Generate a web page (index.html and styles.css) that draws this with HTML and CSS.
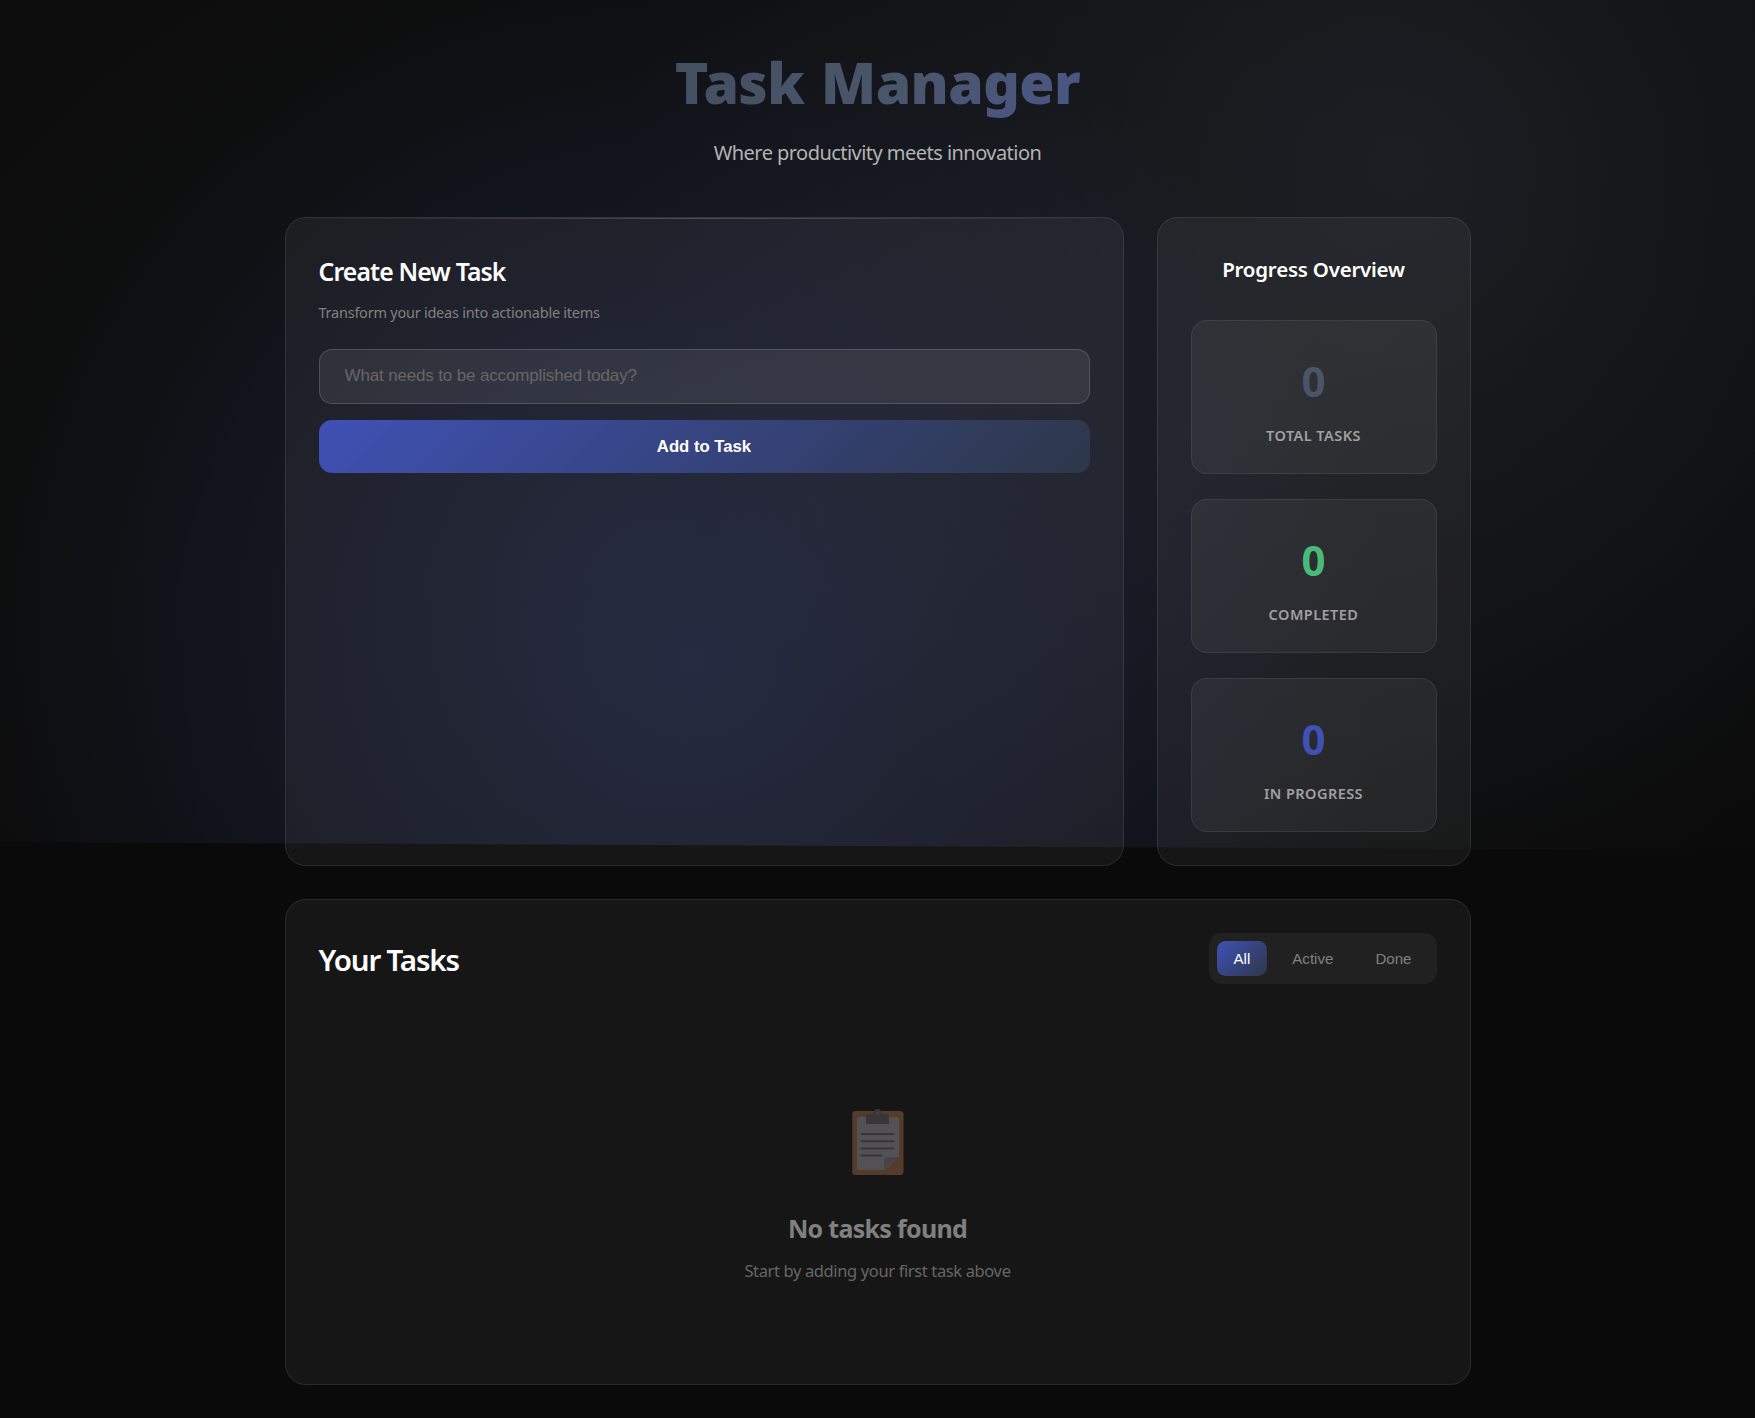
FILE: index.html
```html
<!DOCTYPE html>
<html lang="en">
<head>
<meta charset="utf-8">
<title>Task Manager</title>
<link rel="stylesheet" href="styles.css">
</head>
<body>
<div class="backdrop"></div>
<main class="container">
  <header class="header">
    <h1 class="title"><span class="title-fill">Task Manager</span></h1>
    <p class="subtitle">Where productivity meets innovation</p>
  </header>
  <div class="grid">
    <section class="card create">
      <h2 class="card-title">Create New Task</h2>
      <p class="card-text">Transform your ideas into actionable items</p>
      <form class="form">
        <input class="input" type="text" placeholder="What needs to be accomplished today?">
        <button class="submit" type="button">Add to Task</button>
      </form>
    </section>
    <aside class="card stats">
      <h3 class="stats-title">Progress Overview</h3>
      <div class="stat-list">
        <div class="stat"><div class="num total">0</div><div class="label">Total Tasks</div></div>
        <div class="stat"><div class="num done">0</div><div class="label">Completed</div></div>
        <div class="stat"><div class="num active">0</div><div class="label">In Progress</div></div>
      </div>
    </aside>
    <section class="card tasks">
      <div class="tasks-head">
        <h2 class="tasks-title">Your Tasks</h2>
        <div class="filters">
          <button class="filter selected" type="button">All</button>
          <button class="filter" type="button">Active</button>
          <button class="filter" type="button">Done</button>
        </div>
      </div>
      <div class="empty">
        <svg class="clipboard" viewBox="0 0 52 66" width="52" height="66">
          <rect x="0.3" y="2" width="51.2" height="64" rx="3.5" fill="#b3764a"/>
          <path d="M7 8h38a2 2 0 0 1 2 2v38L33 61H7a2 2 0 0 1-2-2V10a2 2 0 0 1 2-2z" fill="#b0a8b6"/>
          <path d="M47 48H34a2 2 0 0 0-2 2v11z" fill="#8f8896"/>
          <path d="M14 15V8c0-2 1-3 3-3h3.500c.6-3 2.400-5 5-5s4.400 2 5 5H34c2 0 3 1 3 3v7z" fill="#6e6771"/>
          <circle cx="25.500" cy="4.300" r="1.400" fill="#8f8896"/>
          <path d="M9.500 25h32M9.500 32.200h32M9.500 39.400h32M9.500 46.500h20" stroke="#6a6470" stroke-width="2" stroke-linecap="round"/>
        </svg>
        <h3 class="empty-title">No tasks found</h3>
        <p class="empty-text">Start by adding your first task above</p>
      </div>
    </section>
  </div>
</main>
</body>
</html>
```
FILE: styles.css
```css
* { box-sizing: border-box; margin: 0; padding: 0; }
body {
  background: #0a0a0a;
  color: #fff;
  font-family: "Noto Sans", sans-serif;
  height: 1418px;
  overflow: hidden;
}
/* Slightly tilted glow behind the upper part of the page */
.backdrop {
  position: absolute;
  inset: 0 0 auto 0;
  height: 850px;
  z-index: -1;
  clip-path: polygon(0 0, 100% 0, 100% 100%, 0 842px);
  background:
    radial-gradient(ellipse 780px 780px at 1400px 165px, rgba(74, 85, 104, 0.25), transparent 100%),
    radial-gradient(circle 700px at 694px 660px, rgba(63, 81, 181, 0.23), rgba(63, 81, 181, 0.075) 70%, transparent 100%),
    radial-gradient(ellipse 1200px 1000px at 600px 500px, rgba(90, 100, 110, 0.09), transparent 100%);
}
.container { width: 1186px; margin: 0 auto; padding-top: 48px; }
.header { height: 169px; text-align: center; }
.title { height: 68px; font-size: 57px; line-height: 68px; font-weight: 900; letter-spacing: -0.55px; word-spacing: 2.5px; }
.title-fill {
  display: inline-block;
  padding-bottom: 12px;
  background: linear-gradient(135deg, #434e5f 0%, #4a566b 55%, #4a5689 100%);
  -webkit-background-clip: text;
  background-clip: text;
  color: transparent;
}
.subtitle { margin-top: 23px; font-size: 20px; line-height: 28px; letter-spacing: -0.54px; color: #b3b3b3; }
.grid { display: grid; grid-template-columns: 839px 314px; gap: 33px; }
.card {
  background: rgba(255, 255, 255, 0.05);
  border: 1px solid rgba(255, 255, 255, 0.09);
  border-radius: 21px;
  padding: 33px;
}
.create { position: relative; height: 649px; }
.create::before {
  content: "";
  position: absolute;
  top: 0;
  left: 0;
  right: 0;
  height: 1px;
  background: linear-gradient(90deg, transparent, rgba(255, 255, 255, 0.2), transparent);
}
.card-title { font-size: 24.8px; line-height: 41px; font-weight: 600; letter-spacing: -0.88px; }
.card-text { margin-top: 8px; font-size: 14.5px; line-height: 24px; letter-spacing: -0.24px; color: #808080; }
.form { display: flex; flex-direction: column; gap: 16px; margin-top: 25px; }
.input {
  height: 55px;
  border: 1px solid rgba(255, 255, 255, 0.15);
  border-radius: 13px;
  background: rgba(255, 255, 255, 0.08);
  padding: 0 25px 1px;
  font: 17px "Liberation Sans", sans-serif;
  letter-spacing: -0.15px;
  color: #fff;
}
.input::placeholder { color: #666; opacity: 1; }
.submit {
  height: 53px;
  border: 0;
  border-radius: 13px;
  background: linear-gradient(135deg, #3f51b5, #2d3748);
  color: #fff;
  font: bold 16.7px "Liberation Sans", sans-serif;
}
.stats { height: 649px; }
.stats-title { margin-bottom: 33px; text-align: center; font-size: 20.5px; line-height: 36px; font-weight: 600; letter-spacing: -0.23px; }
.stat-list { display: flex; flex-direction: column; gap: 25px; }
.stat {
  height: 154px;
  border: 1px solid rgba(255, 255, 255, 0.08);
  border-radius: 16px;
  background: rgba(255, 255, 255, 0.05);
  text-align: center;
  padding-top: 30px;
}
.num { font-size: 42px; line-height: 60px; font-weight: 700; }
.total { color: #4a5568; }
.done { color: #48bb78; }
.active { color: #3f51b5; }
.label { margin-top: 12px; font-size: 14.5px; line-height: 24px; font-weight: 600; letter-spacing: 0.45px; text-transform: uppercase; color: #a0a0a0; }
.tasks { grid-column: 1 / -1; height: 486px; }
.tasks-head { display: flex; justify-content: space-between; align-items: flex-start; height: 52px; }
.tasks-title { font-size: 29.5px; line-height: 54px; font-weight: 600; letter-spacing: -1.15px; }
.filters { display: flex; gap: 8px; height: 51px; padding: 8px; border-radius: 13px; background: rgba(255, 255, 255, 0.05); }
.filter {
  height: 35px;
  padding: 0 17px 1px;
  border: 0;
  border-radius: 8.5px;
  background: transparent;
  color: #808080;
  font: 15.1px "Liberation Sans", sans-serif;
}
.selected { background: linear-gradient(135deg, #3f51b5, #2d3748); color: #fff; }
.empty { display: flex; flex-direction: column; align-items: center; padding-top: 124px; }
.clipboard { opacity: 0.4; }
.empty-title { margin-top: 33px; font-size: 25px; line-height: 40px; font-weight: 700; letter-spacing: -0.7px; color: #808080; }
.empty-text { margin-top: 10px; font-size: 16.5px; line-height: 26px; letter-spacing: -0.37px; color: #666; }
```
